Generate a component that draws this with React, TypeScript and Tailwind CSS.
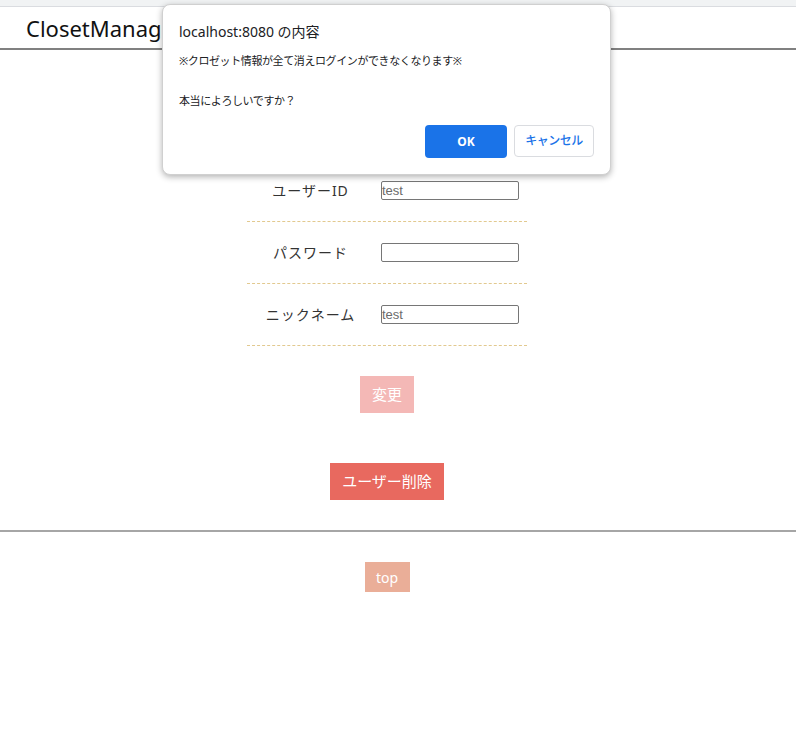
import React from "react";

const JP = "font-['Noto_Sans','Noto_Sans_CJK_JP',sans-serif]";

const rows = [
  { label: "ユーザーID", value: "test" },
  { label: "パスワード", value: "" },
  { label: "ニックネーム", value: "test" },
];

function ConfirmDialog() {
  return (
    <div
      className={`absolute left-[162px] top-[4px] h-[171px] w-[449px] rounded-[8px] border border-[#d0d0d0] bg-white px-[16px] shadow-[0_2px_6px_rgba(0,0,0,0.3)] ${JP}`}
    >
      <p className="mt-[17px] text-[14px] leading-[20px] text-[#202124]">localhost:8080 の内容</p>
      <p className="mt-[9px] whitespace-pre-line text-[11px] leading-[20px] tracking-[-0.4px] text-[#202124]">
        {"※クロゼット情報が全て消えログインができなくなります※\n\n本当によろしいですか？"}
      </p>
      <div className="mt-[14px] flex justify-end gap-[7px]">
        <button className="h-[33px] w-[82px] rounded-[4px] bg-[#1a73e8] text-[12px] font-bold text-white">
          OK
        </button>
        <button className="h-[32px] w-[80px] rounded-[4px] border border-[#dadce0] bg-white text-[12px] font-medium tracking-[-0.5px] text-[#1a73e8]">
          キャンセル
        </button>
      </div>
    </div>
  );
}

export default function App() {
  return (
    <div className={`relative min-h-[730px] bg-white ${JP}`}>
      <div className="h-[7px] border-b border-[#dadce0] bg-[#f1f3f4]" />
      <header className="flex h-[43px] items-center border-b-2 border-[#808080] pl-[26px]">
        <h1 className="text-[22px] leading-none text-[#111]">ClosetManager</h1>
      </header>

      <main className="pr-[22px]">
        <div className="mx-auto mt-[110px] w-[280px]">
          {rows.map((r) => (
            <div
              key={r.label}
              className="grid h-[62px] grid-cols-[127px_153px] items-center border-b border-dashed border-[#e2c98f]"
            >
              <span className="text-center text-[14px] tracking-[1px] text-[#333]">{r.label}</span>
              <input
                readOnly
                defaultValue={r.value}
                className="ml-[7px] h-[19px] w-[138px] rounded-[2px] border border-[#767676] px-0 font-['Liberation_Sans',sans-serif] text-[13px] leading-none text-[#6b6b6b]"
              />
            </div>
          ))}
        </div>

        <div className="mt-[30px] flex justify-center">
          <button className="h-[37px] w-[54px] bg-[#f4b8b6] text-[15px] text-white">変更</button>
        </div>
        <div className="mt-[50px] flex justify-center">
          <button className="h-[37px] w-[114px] bg-[#e8695f] text-[15px] text-white">ユーザー削除</button>
        </div>
      </main>

      <hr className="mt-[30px] border-t-2 border-[#a6a6a6]" />

      <div className="mt-[30px] flex justify-center pr-[22px]">
        <button className="h-[30px] w-[45px] bg-[#eaae98] text-[14px] text-white">top</button>
      </div>

      <ConfirmDialog />
    </div>
  );
}
